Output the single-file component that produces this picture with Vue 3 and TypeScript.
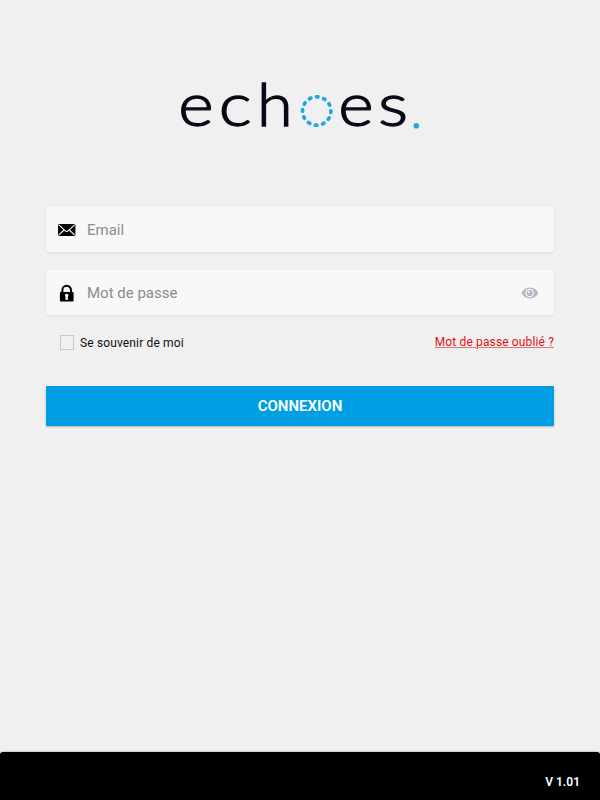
<script setup lang="ts">
import { ref } from 'vue'

interface LogoLetter {
  char: string
  x: number
  stretch: number
}

const letters: LogoLetter[] = [
  { char: 'e', x: 178.2, stretch: 1.13 },
  { char: 'c', x: 218.8, stretch: 1.16 },
  { char: 'h', x: 257, stretch: 1.08 },
  { char: 'e', x: 338.2, stretch: 1.13 },
  { char: 's', x: 378, stretch: 1.18 },
]

const email = ref('')
const password = ref('')
const remember = ref(false)
const showPassword = ref(false)
</script>

<template>
  <main class="screen">
    <svg class="logo" viewBox="170 50 260 110" width="260" height="110">
      <text
        v-for="(l, i) in letters"
        :key="i"
        class="logo-text"
        :transform="`translate(${l.x} 126) scale(${l.stretch} 1)`"
      >{{ l.char }}</text>
      <circle class="logo-ring" cx="316.7" cy="111" r="14.2" pathLength="120" />
      <circle class="logo-dot" cx="416.3" cy="125.8" r="2.8" />
    </svg>

    <form class="form" @submit.prevent>
      <label class="field">
        <svg class="icon mail" width="18" height="12" viewBox="0 0 18 12">
          <rect width="17.4" height="12" rx="1.2" fill="#000" />
          <path d="M.6.6 7 6.6Q8.7 8.4 10.4 6.6L16.8.6M.7 11.2 6 6M16.7 11.2 11.4 6" fill="none" stroke="#f8f8f8" stroke-width="1.1" />
        </svg>
        <input v-model="email" class="input" type="text" placeholder="Email" />
      </label>

      <label class="field">
        <svg class="icon lock" width="18" height="18" viewBox="0 0 18 18">
          <path d="M4.400 9V6a4.300 4.300 0 0 1 8.600 0V9" fill="none" stroke="#000" stroke-width="2" />
          <rect x="1.900" y="8" width="13.700" height="9.400" rx="1" fill="#000" />
          <path d="M8.700 9.800a1.800 1.800 0 0 1 1.100 3.200l.3 2.700H7.300l.3-2.700a1.800 1.800 0 0 1 1.100-3.200z" fill="#f8f8f8" />
        </svg>
        <input v-model="password" class="input" :type="showPassword ? 'text' : 'password'" placeholder="Mot de passe" />
        <svg class="eye" width="18" height="12" viewBox="0 0 18 12" @click.prevent="showPassword = !showPassword">
          <path d="M.4 6C2.200 2.600 5.100.5 8.900.5S15.600 2.600 17.400 6C15.600 9.400 12.700 11.500 8.900 11.500S2.200 9.400.4 6z" fill="#b5b5c3" />
          <circle cx="8.700" cy="6" r="3.700" fill="#b5b5c3" stroke="#f8f8f8" stroke-width="1.200" />
          <circle cx="7.900" cy="5" r="1" fill="#f8f8f8" />
        </svg>
      </label>

      <div class="options">
        <label class="remember">
          <input v-model="remember" class="check" type="checkbox" />
          <span>Se souvenir de moi</span>
        </label>
        <a class="forgot">Mot de passe oublié ?</a>
      </div>

      <button class="submit" type="submit">CONNEXION</button>
    </form>

    <footer class="footer">V 1.01</footer>
  </main>
</template>

<style>
body {
  margin: 0;
  background: #f0f0f0;
}
</style>

<style scoped>
.screen {
  box-sizing: border-box;
  display: flex;
  flex-direction: column;
  height: 800px;
  padding-top: 50px;
  background: #f0f0f0;
  font-family: Roboto, "Liberation Sans", sans-serif;
}
.logo {
  display: block;
  flex: none;
  align-self: center;
}
.logo-text {
  font-family: Lato, sans-serif;
  font-size: 60px;
  font-weight: 300;
  fill: #080816;
  stroke: #080816;
  stroke-width: 1.3;
}
.logo-ring {
  fill: none;
  stroke: #20a7e0;
  stroke-width: 3.7;
  stroke-linecap: round;
  stroke-dasharray: 2.2 7.8;
  stroke-dashoffset: 0.3;
}
.logo-dot {
  fill: #20a7e0;
}
.form {
  display: flex;
  flex-direction: column;
  margin: 47px 46px 0;
}
.field {
  display: flex;
  align-items: center;
  box-sizing: border-box;
  height: 45px;
  margin-bottom: 18px;
  padding: 0 15px 0 12px;
  border-radius: 3px;
  background: #f8f8f8;
  box-shadow: 0 1px 2px rgba(0, 0, 0, 0.09);
}
.icon {
  flex: none;
}
.mail,
.lock {
  margin-top: 1px;
}
.input {
  flex: 1;
  min-width: 0;
  margin-left: 11px;
  padding: 0;
  border: 0;
  outline: 0;
  background: transparent;
  font: 400 15px/20px Roboto, sans-serif;
  color: #222;
}
.input::placeholder {
  color: #8c8c8c;
  opacity: 1;
}
.eye {
  flex: none;
}
.options {
  display: flex;
  justify-content: space-between;
  height: 20px;
  padding-left: 14px;
}
.remember {
  display: flex;
  align-items: center;
  gap: 6px;
  height: 19px;
  font-size: 12px;
  letter-spacing: 0.14px;
  color: #111;
}
.check {
  appearance: none;
  box-sizing: border-box;
  width: 14px;
  height: 15px;
  margin: 0;
  border: 1px solid #c8c8c8;
}
.check:checked {
  background: #009fe5;
}
.forgot {
  font-size: 12px;
  line-height: 19px;
  letter-spacing: 0.14px;
  color: #e01010;
  text-decoration: underline;
  text-decoration-color: #e87070;
  text-decoration-thickness: 1px;
}
.submit {
  height: 40px;
  margin-top: 33px;
  padding: 0;
  border: 0;
  border-radius: 1px;
  background: #009fe5;
  box-shadow: 0 1px 2px rgba(0, 0, 0, 0.25);
  font: 600 15px/40px Roboto, sans-serif;
  color: #fff;
}
.footer {
  box-sizing: border-box;
  height: 48px;
  margin-top: auto;
  padding: 21px 20px 0;
  border-radius: 3px 3px 0 0;
  background: #000;
  box-shadow: 0 -1px 1px rgba(0, 0, 0, 0.15);
  font-size: 12px;
  font-weight: 600;
  line-height: 18px;
  text-align: right;
  color: #fff;
}
</style>
